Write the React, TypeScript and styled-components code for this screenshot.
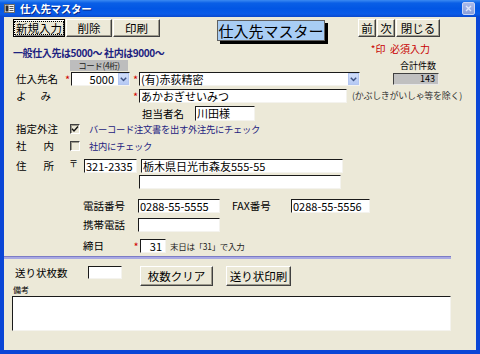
import React from 'react';
import styled, { createGlobalStyle, css } from 'styled-components';

const FONT = `"Noto Sans CJK JP", "Noto Sans", sans-serif`;

const Global = createGlobalStyle`
  html, body { margin: 0; padding: 0; background: #ffffff; }
  body { font-family: ${FONT}; }
  #root { width: 480px; height: 354px; }
  * { box-sizing: border-box; }
`;

const Window = styled.div`
  width: 480px;
  height: 354px;
  display: flex;
  flex-direction: column;
  background: #0a46d6;
  overflow: hidden;
`;

const TitleBar = styled.div`
  height: 17px;
  flex-shrink: 0;
  display: flex;
  align-items: center;
  padding: 0 5px 0 4px;
  background: linear-gradient(180deg, #3b8af2 0%, #0a5fe6 18%, #0256e4 50%, #0a5be8 82%, #0a48cc 100%);
`;

const TitleText = styled.span`
  margin-left: 5px;
  color: #ffffff;
  font-size: 10.5px;
  font-weight: bold;
  line-height: 17px;
  text-shadow: 1px 1px 0 #0a2a8a;
  letter-spacing: -0.3px;
`;

const CloseBtn = styled.div`
  margin-left: auto;
  width: 13px;
  height: 13px;
  border-radius: 2px;
  border: 1px solid #c9d5f5;
  background: linear-gradient(180deg, #a9b9ea, #8aa0dc);
  display: flex;
  align-items: center;
  justify-content: center;
`;

const Body = styled.div`
  flex: 1;
  margin: 0 4px 4px 4px;
  background: #ece9d8;
  display: flex;
  flex-direction: column;
`;

const Row = styled.div<{ $h: number; $mt?: number; $pl?: number; $align?: string }>`
  display: flex;
  align-items: ${p => p.$align ?? 'center'};
  height: ${p => p.$h}px;
  margin-top: ${p => p.$mt ?? 0}px;
  padding-left: ${p => p.$pl ?? 0}px;
  flex-shrink: 0;
`;

const Btn = styled.div<{ $w: number; $h?: number; $ml?: number; $focus?: boolean }>`
  width: ${p => p.$w}px;
  height: ${p => p.$h ?? 18}px;
  margin-left: ${p => p.$ml ?? 0}px;
  flex-shrink: 0;
  display: flex;
  align-items: center;
  justify-content: center;
  font-size: 11.5px;
  color: #000;
  background: #ece9d8;
  border: 1px solid;
  border-color: #ffffff #404040 #404040 #ffffff;
  box-shadow: inset -1px -1px 0 #9d9a8c;
  white-space: nowrap;
  ${p =>
    p.$focus &&
    css`
      border-color: #000;
      box-shadow: inset 1px 1px 0 #fff, inset -1px -1px 0 #808080;
      & > span {
        outline: 1px dotted #000;
        outline-offset: 0px;
        padding: 0 1px;
        line-height: 12px;
      }
    `}
`;

const TitleBox = styled.div`
  width: 108px;
  height: 21px;
  margin-left: 57px;
  margin-top: 1px;
  flex-shrink: 0;
  background: #a8cdf4;
  border: 1px solid #606060;
  box-shadow: 3px 3px 0 #000;
  display: flex;
  align-items: center;
  justify-content: center;
  font-size: 15px;
  line-height: 19px;
  color: #000;
  white-space: nowrap;
`;

const Group = styled.div<{ $ml?: number }>`
  display: flex;
  gap: 1px;
  margin-left: ${p => p.$ml ?? 0}px;
  flex-shrink: 0;
`;

const NavyNote = styled.div<{ $ml?: number }>`
  margin-left: ${p => p.$ml ?? 0}px;
  align-self: flex-end;
  font-size: 10px;
  font-weight: bold;
  line-height: 12px;
  color: #1c2280;
  white-space: nowrap;
  letter-spacing: -0.4px;
`;

const RedNote = styled.div<{ $mr: number }>`
  margin-left: auto;
  margin-right: ${p => p.$mr}px;
  align-self: flex-start;
  font-size: 10px;
  line-height: 12px;
  color: #c80000;
  white-space: nowrap;
`;

const CodeTag = styled.div`
  margin-left: 66px;
  width: 58px;
  height: 11px;
  background: #bdbdbd;
  font-size: 8.5px;
  line-height: 11px;
  text-align: center;
  color: #222;
  white-space: nowrap;
  letter-spacing: -0.4px;
`;

const SmallLabel = styled.div<{ $mr: number }>`
  margin-left: auto;
  margin-right: ${p => p.$mr}px;
  font-size: 9px;
  line-height: 11px;
  color: #000;
  white-space: nowrap;
`;

const Label = styled.div<{ $w: number; $ml?: number; $size?: number }>`
  width: ${p => p.$w}px;
  margin-left: ${p => p.$ml ?? 0}px;
  flex-shrink: 0;
  font-size: ${p => p.$size ?? 10.5}px;
  line-height: 14px;
  color: #000;
  white-space: nowrap;
`;

const SpacedLabel = styled.div<{ $w: number; $gapAfter: number }>`
  width: ${p => p.$w}px;
  margin-right: ${p => p.$gapAfter}px;
  flex-shrink: 0;
  display: flex;
  justify-content: space-between;
  font-size: 10.5px;
  line-height: 14px;
  color: #000;
`;

const Star = styled.div<{ $w: number; $ml?: number }>`
  width: ${p => p.$w}px;
  margin-left: ${p => p.$ml ?? 0}px;
  flex-shrink: 0;
  color: #d00000;
  font-size: 11px;
  line-height: 14px;
  text-align: center;
`;

const TextBox = styled.div<{ $w: number; $h?: number; $ml?: number; $right?: boolean }>`
  width: ${p => p.$w}px;
  height: ${p => p.$h ?? 14}px;
  margin-left: ${p => p.$ml ?? 0}px;
  flex-shrink: 0;
  background: #ffffff;
  border: 1px solid;
  border-color: #1a1a1a #f4f3ee #f4f3ee #1a1a1a;
  font-size: 11px;
  line-height: ${p => (p.$h ?? 14) - 2}px;
  padding: 0 ${p => (p.$right ? 3 : 1)}px 0 1px;
  text-align: ${p => (p.$right ? 'right' : 'left')};
  color: #000;
  white-space: nowrap;
`;

const Combo = styled.div<{ $w: number; $ml?: number }>`
  width: ${p => p.$w}px;
  height: 14px;
  margin-left: ${p => p.$ml ?? 0}px;
  flex-shrink: 0;
  display: flex;
  background: #ffffff;
  border: 1px solid;
  border-color: #1a1a1a #f4f3ee #f4f3ee #1a1a1a;
`;

const ComboText = styled.div<{ $right?: boolean }>`
  flex: 1;
  font-size: 11px;
  line-height: 12px;
  padding: 0 ${p => (p.$right ? 4 : 1)}px 0 1px;
  text-align: ${p => (p.$right ? 'right' : 'left')};
  white-space: nowrap;
  color: #000;
`;

const ComboArrow = styled.div`
  width: 11px;
  height: 12px;
  background: linear-gradient(180deg, #d2def9, #b5c9f4);
  border: 1px solid #b3c6f1;
  display: flex;
  align-items: center;
  justify-content: center;
`;

const TotalBox = styled.div`
  width: 46px;
  height: 12px;
  margin-left: 33px;
  flex-shrink: 0;
  background: #c0c0c0;
  border: 1px solid;
  border-color: #404040 #e8e8e8 #e8e8e8 #404040;
  font-size: 9px;
  line-height: 10px;
  text-align: right;
  padding-right: 3px;
  color: #000;
`;

const Hint = styled.div<{ $ml: number; $size: number; $color?: string }>`
  margin-left: ${p => p.$ml}px;
  font-size: ${p => p.$size}px;
  line-height: 14px;
  color: ${p => p.$color ?? '#222'};
  white-space: nowrap;
  letter-spacing: -0.3px;
`;

const CheckBox = styled.div<{ $ml?: number }>`
  width: 10px;
  height: 10px;
  margin-left: ${p => p.$ml ?? 0}px;
  flex-shrink: 0;
  border: 1px solid;
  border-color: #404040 #ffffff #ffffff #404040;
  box-shadow: inset 1px 1px 0 #9d9a8c;
  background: #ece9d8;
  display: flex;
  align-items: center;
  justify-content: center;
`;

const CheckText = styled.div<{ $ml: number }>`
  margin-left: ${p => p.$ml}px;
  font-size: 9.3px;
  line-height: 14px;
  color: #1c2280;
  white-space: nowrap;
  letter-spacing: -0.3px;
`;

const Postal = styled.div`
  width: 9px;
  margin-left: 15px;
  margin-right: 6px;
  font-size: 9px;
  line-height: 10px;
  align-self: flex-start;
  color: #000;
`;

const Separator = styled.div`
  width: 447px;
  height: 3px;
  flex-shrink: 0;
  margin-top: 3px;
  background: #a9a9e2;
  border-top: 1px solid #7c7cc6;
`;

const TinyLabel = styled.div`
  font-size: 8px;
  line-height: 9px;
  color: #000;
`;

const Memo = styled.div`
  width: 439px;
  height: 35px;
  margin: 2px 0 0 8px;
  flex-shrink: 0;
  background: #ffffff;
  border: 1px solid;
  border-color: #1a1a1a #f4f3ee #f4f3ee #1a1a1a;
`;

const FormIcon = () => (
  <svg width="11" height="9" viewBox="0 0 11 9">
    <rect x="0.5" y="0.5" width="10" height="8" fill="#f4f4f4" stroke="#6b6b6b" />
    <rect x="1.5" y="1.5" width="3" height="6" fill="#2a2a2a" />
    <line x1="5.5" y1="2.5" x2="9.5" y2="2.5" stroke="#555" />
    <line x1="5.5" y1="4.5" x2="9.5" y2="4.5" stroke="#555" />
    <line x1="5.5" y1="6.5" x2="9.5" y2="6.5" stroke="#555" />
  </svg>
);

const CloseX = () => (
  <svg width="7" height="7" viewBox="0 0 7 7">
    <path d="M1 1 L6 6 M6 1 L1 6" stroke="#dfe6fa" strokeWidth="1.4" />
  </svg>
);

const Chevron = () => (
  <svg width="7" height="5" viewBox="0 0 7 5">
    <path d="M0.8 0.8 L3.5 3.6 L6.2 0.8" stroke="#3c5182" strokeWidth="1.4" fill="none" />
  </svg>
);

const Tick = () => (
  <svg width="8" height="8" viewBox="0 0 8 8">
    <path d="M1 3.8 L3 6 L7 1.5" stroke="#111" strokeWidth="1.4" fill="none" />
  </svg>
);

export default function App() {
  return (
    <>
      <Global />
      <Window>
        <TitleBar>
          <FormIcon />
          <TitleText>仕入先マスター</TitleText>
          <CloseBtn>
            <CloseX />
          </CloseBtn>
        </TitleBar>
        <Body>
          <Row $h={24} $mt={2} $pl={9} $align="flex-start">
            <Group>
              <Btn $w={52} $focus>
                <span>新規入力</span>
              </Btn>
              <Btn $w={46}>削除</Btn>
              <Btn $w={47}>印刷</Btn>
            </Group>
            <TitleBox>仕入先マスター</TitleBox>
            <Group $ml={33}>
              <Btn $w={18}>前</Btn>
              <Btn $w={18}>次</Btn>
              <Btn $w={44}>閉じる</Btn>
            </Group>
          </Row>

          <Row $h={16} $pl={9}>
            <NavyNote>一般仕入先は5000～ 社内は9000～</NavyNote>
            <RedNote $mr={46}>*印&nbsp;&nbsp;必須入力</RedNote>
          </Row>

          <Row $h={11} $mt={1}>
            <CodeTag>コード(4桁)</CodeTag>
            <SmallLabel $mr={40}>合計件数</SmallLabel>
          </Row>

          <Row $h={14} $mt={1} $pl={12}>
            <Label $w={48}>仕入先名</Label>
            <Star $w={7}>*</Star>
            <Combo $w={59}>
              <ComboText $right>5000</ComboText>
              <ComboArrow>
                <Chevron />
              </ComboArrow>
            </Combo>
            <Star $w={7} $ml={2}>*</Star>
            <Combo $w={221}>
              <ComboText>(有)赤荻精密</ComboText>
              <ComboArrow>
                <Chevron />
              </ComboArrow>
            </Combo>
            <TotalBox>143</TotalBox>
          </Row>

          <Row $h={14} $mt={3} $pl={12}>
            <SpacedLabel $w={35} $gapAfter={81}>
              <span>よ</span>
              <span>み</span>
            </SpacedLabel>
            <Star $w={7}>*</Star>
            <TextBox $w={208}>あかおぎせいみつ</TextBox>
            <Hint $ml={5} $size={9} $color="#333">(かぶしきがいしゃ等を除く)</Hint>
          </Row>

          <Row $h={15} $mt={3} $pl={138}>
            <Label $w={53}>担当者名</Label>
            <TextBox $w={60} $h={15}>川田様</TextBox>
          </Row>

          <Row $h={14} $mt={1} $pl={12}>
            <Label $w={54}>指定外注</Label>
            <CheckBox>
              <Tick />
            </CheckBox>
            <CheckText $ml={9}>バーコード注文書を出す外注先にチェック</CheckText>
          </Row>

          <Row $h={14} $mt={3} $pl={12}>
            <SpacedLabel $w={38} $gapAfter={16}>
              <span>社</span>
              <span>内</span>
            </SpacedLabel>
            <CheckBox />
            <CheckText $ml={9}>社内にチェック</CheckText>
          </Row>

          <Row $h={14} $mt={6} $pl={12}>
            <SpacedLabel $w={38} $gapAfter={0}>
              <span>住</span>
              <span>所</span>
            </SpacedLabel>
            <Postal>〒</Postal>
            <TextBox $w={53}>321-2335</TextBox>
            <TextBox $w={202} $ml={4}>栃木県日光市森友555-55</TextBox>
          </Row>

          <Row $h={14} $mt={2} $pl={135}>
            <TextBox $w={202} />
          </Row>

          <Row $h={14} $mt={10} $pl={79}>
            <Label $w={55}>電話番号</Label>
            <TextBox $w={82}>0288-55-5555</TextBox>
            <Label $w={59} $ml={12}>FAX番号</Label>
            <TextBox $w={79}>0288-55-5556</TextBox>
          </Row>

          <Row $h={14} $mt={5} $pl={79}>
            <Label $w={55}>携帯電話</Label>
            <TextBox $w={82} />
          </Row>

          <Row $h={14} $mt={7} $pl={79}>
            <Label $w={49}>締日</Label>
            <Star $w={8}>*</Star>
            <TextBox $w={26} $right>31</TextBox>
            <Hint $ml={4} $size={8.5}>末日は「31」で入力</Hint>
          </Row>

          <Separator />

          <Row $h={17} $mt={7} $pl={11} $align="flex-start">
            <Label $w={73} $size={10.5}>送り状枚数</Label>
            <TextBox $w={34} $h={13} />
            <Btn $w={73} $h={20} $ml={18}>枚数クリア</Btn>
            <Btn $w={65} $h={20} $ml={13}>送り状印刷</Btn>
          </Row>

          <Row $h={9} $mt={2} $pl={9}>
            <TinyLabel>備考</TinyLabel>
          </Row>

          <Memo />
        </Body>
      </Window>
    </>
  );
}
